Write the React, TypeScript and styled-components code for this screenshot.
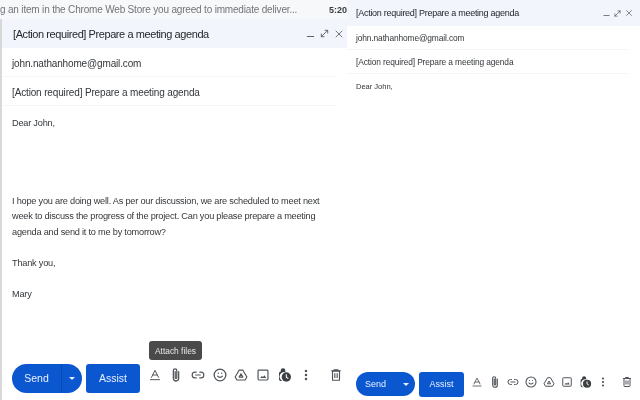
import React from "react";
import styled, { createGlobalStyle } from "styled-components";
import { Baseline, Link2, Smile, MoreVertical, X, MoveDiagonal, Minus } from "lucide-react";

const GlobalStyle = createGlobalStyle`
  html, body {
    margin: 0;
    padding: 0;
    width: 640px;
    height: 400px;
    overflow: hidden;
    background: #fff;
    font-family: "Liberation Sans", Arial, sans-serif;
  }
`;

const Page = styled.div`
  width: 640px;
  height: 400px;
  display: grid;
  grid-template-columns: 347px 293px;
  overflow: hidden;
  filter: blur(0.3px);
`;

const LeftPane = styled.div`
  display: flex;
  flex-direction: column;
  min-width: 0;
`;

const InboxStrip = styled.div`
  height: 19px;
  flex: none;
  background: #f7f8f9;
  display: flex;
  align-items: center;
  justify-content: space-between;
  overflow: hidden;
`;

const Snippet = styled.span`
  font-size: 10px;
  letter-spacing: -0.18px;
  color: #70757a;
  white-space: nowrap;
`;

const Time = styled.span`
  font-size: 9px;
  font-weight: bold;
  color: #3c4043;
`;

const Composer = styled.div`
  flex: 1;
  display: flex;
  flex-direction: column;
  min-height: 0;
  border-left: 2px solid #d8d8d8;
  background: #fff;
`;

const TitleBar = styled.div<{ $small?: boolean }>`
  height: ${({ $small }) => ($small ? "26px" : "29px")};
  flex: none;
  display: flex;
  align-items: center;
  justify-content: space-between;
  background: #f2f6fc;
  padding: ${({ $small }) => ($small ? "0 6px 0 9px" : "0 2px 0 11px")};
`;

const Title = styled.span<{ $small?: boolean }>`
  font-size: ${({ $small }) => ($small ? "9px" : "11px")};
  letter-spacing: ${({ $small }) => ($small ? "-0.28px" : "-0.42px")};
  color: #24282c;
`;

const WindowIcons = styled.div<{ $small?: boolean }>`
  display: flex;
  align-items: center;
  gap: ${({ $small }) => ($small ? "2px" : "3px")};
  color: #50555a;
`;

const LowMinus = styled(Minus)`
  margin-top: 5px;
`;

const Field = styled.div<{ $small?: boolean }>`
  flex: none;
  height: ${({ $small }) => ($small ? "24px" : "29px")};
  margin-right: ${({ $small }) => ($small ? "12px" : "10px")};
  display: flex;
  align-items: center;
  box-sizing: border-box;
  padding-left: ${({ $small }) => ($small ? "9px" : "10px")};
  padding-top: ${({ $small }) => ($small ? "0" : "2px")};
  font-size: ${({ $small }) => ($small ? "8.4px" : "10px")};
  letter-spacing: ${({ $small }) => ($small ? "-0.12px" : "-0.15px")};
  color: #33373b;
  border-bottom: 1px solid #f6f6f6;
`;

const Body = styled.div`
  flex: 1;
  min-height: 0;
  padding: 10px 10px 0 10px;
  font-size: 9.2px;
  letter-spacing: -0.22px;
  line-height: 15.4px;
  color: #33373b;
`;

const SmallBody = styled(Body)`
  padding: 5px 16px 0 9px;
  font-size: 7.6px;
  letter-spacing: -0.05px;
`;

const Paragraph = styled.p<{ $gap: number }>`
  margin: 0 0 ${({ $gap }) => $gap}px;
`;

const Toolbar = styled.div<{ $small?: boolean }>`
  position: relative;
  flex: none;
  height: ${({ $small }) => ($small ? "32px" : "44px")};
  display: flex;
  align-items: center;
  padding-left: ${({ $small }) => ($small ? "9px" : "10px")};
  box-sizing: border-box;
`;

const SendGroup = styled.div<{ $small?: boolean }>`
  flex: none;
  width: ${({ $small }) => ($small ? "59px" : "70px")};
  height: ${({ $small }) => ($small ? "24px" : "29px")};
  border-radius: 15px;
  background: #0b57d0;
  color: #e8f0fe;
  display: flex;
  align-items: center;
  font-size: ${({ $small }) => ($small ? "9px" : "10.5px")};
`;

const SendLabel = styled.span<{ $small?: boolean }>`
  flex: 1;
  height: 100%;
  display: flex;
  align-items: center;
  justify-content: center;
  border-right: 1px solid ${({ $small }) => ($small ? "#0b57d0" : "#0a49ad")};
`;

const SendArrow = styled.span<{ $small?: boolean }>`
  flex: none;
  width: ${({ $small }) => ($small ? "19px" : "20px")};
  display: flex;
  justify-content: center;
`;

const Caret = styled.i`
  width: 0;
  height: 0;
  border-left: 3px solid transparent;
  border-right: 3px solid transparent;
  border-top: 3px solid #e8f0fe;
`;

const AssistButton = styled.div<{ $small?: boolean }>`
  flex: none;
  margin-left: 4px;
  width: ${({ $small }) => ($small ? "45px" : "54px")};
  height: ${({ $small }) => ($small ? "25px" : "29px")};
  border-radius: 3px;
  background: #0b57d0;
  color: #e8f0fe;
  font-size: ${({ $small }) => ($small ? "9px" : "10.5px")};
  display: flex;
  align-items: center;
  justify-content: center;
`;

const ToolIcons = styled.div<{ $small?: boolean }>`
  flex: none;
  display: flex;
  align-items: center;
  margin-left: 4px;
  margin-bottom: ${({ $small }) => ($small ? "5px" : "6px")};
  color: #50555a;
`;

const ToolSlot = styled.span<{ $small?: boolean; $last?: boolean }>`
  flex: none;
  width: ${({ $small }) => ($small ? "18px" : "21.6px")};
  margin-left: ${({ $last, $small }) => ($last ? ($small ? "6px" : "8.4px") : "0")};
  display: flex;
  justify-content: center;
`;

const Tooltip = styled.div`
  position: absolute;
  left: 147px;
  top: -15px;
  width: 53px;
  height: 19px;
  border-radius: 3px;
  background: #4a4a4a;
  color: #e8e8e8;
  font-size: 8.4px;
  display: flex;
  align-items: center;
  justify-content: center;
`;

const RightPane = styled.div`
  display: flex;
  flex-direction: column;
  min-width: 0;
  background: #fff;
`;

const ClipIcon = ({ size }: { size: number }) => (
  <svg width={size} height={size} viewBox="0 0 24 24" fill="none" stroke="currentColor" strokeWidth="1.9" strokeLinecap="round">
    <path d="M16 7v10a4 4 0 0 1-8 0V5.5a2.6 2.6 0 0 1 5.2 0V16a1.2 1.2 0 0 1-2.4 0V7" />
  </svg>
);

const DriveIcon = ({ size }: { size: number }) => (
  <svg width={size} height={size} viewBox="0 0 24 24" fill="none" stroke="currentColor" strokeWidth="2" strokeLinejoin="round">
    <path d="M9 3.5h6l7 12-3 5H5l-3-5Z" />
    <path d="M12 10l-3.2 5.5h6.4Z" />
  </svg>
);

const PhotoIcon = ({ size }: { size: number }) => (
  <svg width={size} height={size} viewBox="0 0 24 24" fill="none" stroke="currentColor" strokeWidth="2">
    <rect x="3.5" y="3.5" width="17" height="17" rx="1.5" />
    <path d="M7 17l3-3.5 2 2 2.5-3 3 4.5Z" fill="currentColor" stroke="none" />
  </svg>
);

const LockClockIcon = ({ size }: { size: number }) => (
  <svg width={size} height={size} viewBox="0 0 24 24" fill="#3c4043">
    <path d="M7 7V5.5a3.5 3.5 0 0 1 7 0V8h1.5a7 7 0 0 0-6 13H7a2.5 2.5 0 0 1-2.5-2.5V9.5C4.5 8 5.5 7 7 7Z" />
    <circle cx="15.5" cy="15" r="7" />
    <path d="M15.5 11v4.4l3 1.8" stroke="#fff" strokeWidth="1.6" fill="none" />
  </svg>
);

const BinIcon = ({ size }: { size: number }) => (
  <svg width={size} height={size} viewBox="0 0 24 24" fill="none" stroke="currentColor" strokeWidth="2">
    <path d="M4 5h16M9 5V3h6v2" />
    <rect x="6" y="5" width="12" height="16" rx="1" />
    <path d="M10 9v8M14 9v8" />
  </svg>
);

const Toolset = ({ small }: { small?: boolean }) => {
  const s = small ? 12 : 14;
  return (
    <ToolIcons $small={small}>
      <ToolSlot $small={small}><Baseline size={s} strokeWidth={1.7} /></ToolSlot>
      <ToolSlot $small={small}><ClipIcon size={s + 2} /></ToolSlot>
      <ToolSlot $small={small}><Link2 size={s} strokeWidth={2} /></ToolSlot>
      <ToolSlot $small={small}><Smile size={s} strokeWidth={2.2} /></ToolSlot>
      <ToolSlot $small={small}><DriveIcon size={s} /></ToolSlot>
      <ToolSlot $small={small}><PhotoIcon size={s} /></ToolSlot>
      <ToolSlot $small={small}><LockClockIcon size={s + 2} /></ToolSlot>
      <ToolSlot $small={small}><MoreVertical size={s} strokeWidth={2.4} /></ToolSlot>
      <ToolSlot $small={small} $last><BinIcon size={s} /></ToolSlot>
    </ToolIcons>
  );
};

const WindowControls = ({ small }: { small?: boolean }) => {
  const s = small ? 9 : 11;
  return (
    <WindowIcons $small={small}>
      <LowMinus size={s} strokeWidth={2} />
      <MoveDiagonal size={s} strokeWidth={1.8} />
      <X size={s + 1} strokeWidth={1.6} />
    </WindowIcons>
  );
};

const SUBJECT = "[Action required] Prepare a meeting agenda";
const EMAIL = "john.nathanhome@gmail.com";

const App: React.FC = () => (
  <Page>
    <GlobalStyle />
    <LeftPane>
      <InboxStrip>
        <Snippet>g an item in the Chrome Web Store you agreed to immediate deliver...</Snippet>
        <Time>5:20</Time>
      </InboxStrip>
      <Composer>
        <TitleBar>
          <Title>{SUBJECT}</Title>
          <WindowControls />
        </TitleBar>
        <Field>{EMAIL}</Field>
        <Field>{SUBJECT}</Field>
        <Body>
          <Paragraph $gap={62.6}>Dear John,</Paragraph>
          <Paragraph $gap={15.6}>
            I hope you are doing well. As per our discussion, we are scheduled to meet next
            <br />
            week to discuss the progress of the project. Can you please prepare a meeting
            <br />
            agenda and send it to me by tomorrow?
          </Paragraph>
          <Paragraph $gap={15.6}>Thank you,</Paragraph>
          <Paragraph $gap={0}>Mary</Paragraph>
        </Body>
        <Toolbar>
          <Tooltip>Attach files</Tooltip>
          <SendGroup>
            <SendLabel>Send</SendLabel>
            <SendArrow><Caret /></SendArrow>
          </SendGroup>
          <AssistButton>Assist</AssistButton>
          <Toolset />
        </Toolbar>
      </Composer>
    </LeftPane>
    <RightPane>
      <TitleBar $small>
        <Title $small>{SUBJECT}</Title>
        <WindowControls small />
      </TitleBar>
      <Field $small>{EMAIL}</Field>
      <Field $small>{SUBJECT}</Field>
      <SmallBody>
        <Paragraph $gap={0}>Dear John,</Paragraph>
      </SmallBody>
      <Toolbar $small>
        <SendGroup $small>
          <SendLabel $small>Send</SendLabel>
          <SendArrow $small><Caret /></SendArrow>
        </SendGroup>
        <AssistButton $small>Assist</AssistButton>
        <Toolset small />
      </Toolbar>
    </RightPane>
  </Page>
);

export default App;
